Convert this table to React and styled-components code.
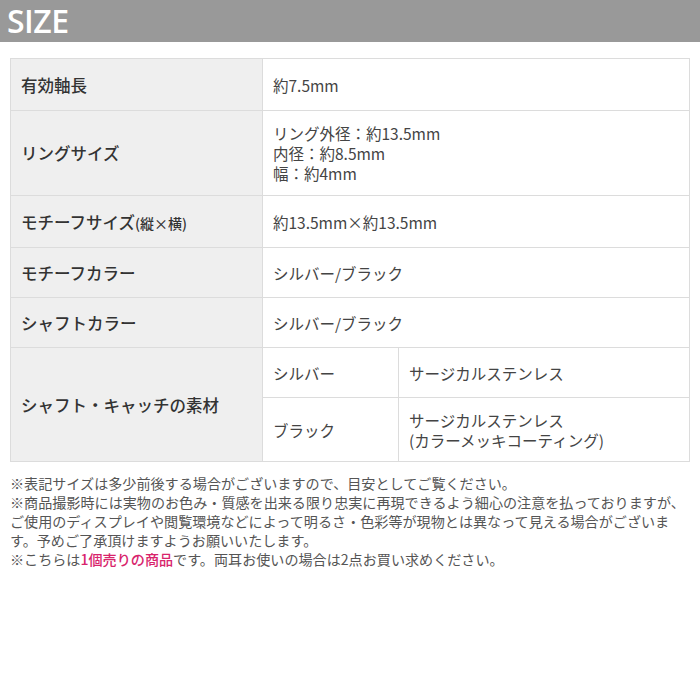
import styled, { createGlobalStyle } from 'styled-components'

const GlobalCSS = createGlobalStyle`
  * { margin: 0; padding: 0; box-sizing: border-box; }
  body {
    background: #fff;
    font-family: "Noto Sans CJK JP", "Noto Sans", sans-serif;
    color: #444;
  }
`

const Page = styled.div`
  width: 700px;
  height: 700px;
  display: flex;
  flex-direction: column;
`

const Header = styled.h1`
  height: 42px;
  background: #999999;
  color: #fff;
  font-family: "Open Sans", "Noto Sans", sans-serif;
  font-weight: 600;
  font-size: 32px;
  line-height: 42px;
  padding-left: 7px;
  letter-spacing: -0.5px;
`

const Table = styled.table`
  margin: 16px 10px 0;
  width: 680px;
  border-collapse: collapse;
  border: 1px solid #dcdcdc;
  table-layout: fixed;
`

const Label = styled.th`
  background: #efefef;
  border: 1px solid #dcdcdc;
  text-align: left;
  font-weight: 500;
  font-size: 16.5px;
  color: #333;
  padding: 0 10px;
`

const Value = styled.td`
  border: 1px solid #dcdcdc;
  font-size: 15.5px;
  line-height: 20px;
  color: #444;
  padding: 0 10px;
  height: ${(p) => p.$h}px;
`

const Line = styled.div`
  line-height: 20px;
`

const Small = styled.span`
  font-size: 14px;
`

const Notes = styled.p`
  margin: 12px 10px 0;
  font-size: 14.1px;
  line-height: 19px;
  color: #555;
  white-space: nowrap;
`

const Pink = styled.span`
  color: #d8246c;
  font-weight: 500;
`

const rows = [
  { label: '有効軸長', value: '約7.5mm', h: 52 },
  { label: 'リングサイズ', value: ['リング外径：約13.5mm', '内径：約8.5mm', '幅：約4mm'], h: 85 },
  { label: <>モチーフサイズ<Small>(縦×横)</Small></>, value: '約13.5mm×約13.5mm', h: 52 },
  { label: 'モチーフカラー', value: 'シルバー/ブラック', h: 50 },
  { label: 'シャフトカラー', value: 'シルバー/ブラック', h: 50 },
]

export default function App() {
  return (
    <>
      <GlobalCSS />
      <Page>
        <Header>SIZE</Header>
        <Table>
          <colgroup>
            <col style={{ width: 252 }} />
            <col style={{ width: 136 }} />
            <col />
          </colgroup>
          <tbody>
            {rows.map((r, i) => (
              <tr key={i}>
                <Label>{r.label}</Label>
                <Value colSpan={2} $h={r.h}>
                  {Array.isArray(r.value)
                    ? r.value.map((v, j) => <Line key={j}>{v}</Line>)
                    : r.value}
                </Value>
              </tr>
            ))}
            <tr>
              <Label rowSpan={2}>シャフト・キャッチの素材</Label>
              <Value $h={50}>シルバー</Value>
              <Value $h={50}>サージカルステンレス</Value>
            </tr>
            <tr>
              <Value $h={64}>ブラック</Value>
              <Value $h={64}>
                <Line>サージカルステンレス</Line>
                <Line>(カラーメッキコーティング)</Line>
              </Value>
            </tr>
          </tbody>
        </Table>
        <Notes>
          ※表記サイズは多少前後する場合がございますので、目安としてご覧ください。<br />
          ※商品撮影時には実物のお色み・質感を出来る限り忠実に再現できるよう細心の注意を払っておりますが、<br />
          ご使用のディスプレイや閲覧環境などによって明るさ・色彩等が現物とは異なって見える場合がございま<br />
          す。予めご了承頂けますようお願いいたします。<br />
          ※こちらは<Pink>1個売りの商品</Pink>です。両耳お使いの場合は2点お買い求めください。
        </Notes>
      </Page>
    </>
  )
}
